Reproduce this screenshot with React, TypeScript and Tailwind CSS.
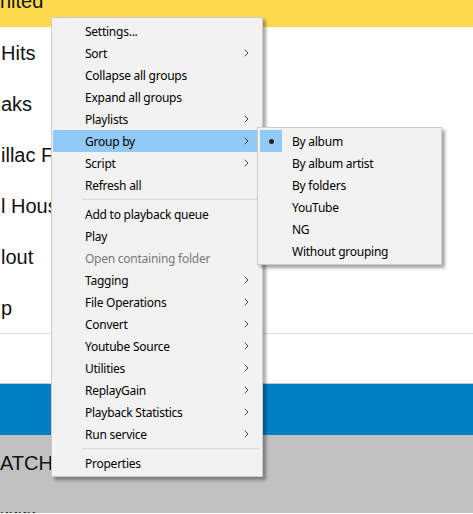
import React from 'react';

type Item =
  | { kind: 'sep' }
  | { kind: 'item'; label: string; sub?: boolean; disabled?: boolean; active?: boolean };

const mainItems: Item[] = [
  { kind: 'item', label: 'Settings...' },
  { kind: 'item', label: 'Sort', sub: true },
  { kind: 'item', label: 'Collapse all groups' },
  { kind: 'item', label: 'Expand all groups' },
  { kind: 'item', label: 'Playlists', sub: true },
  { kind: 'item', label: 'Group by', sub: true, active: true },
  { kind: 'item', label: 'Script', sub: true },
  { kind: 'item', label: 'Refresh all' },
  { kind: 'sep' },
  { kind: 'item', label: 'Add to playback queue' },
  { kind: 'item', label: 'Play' },
  { kind: 'item', label: 'Open containing folder', disabled: true },
  { kind: 'item', label: 'Tagging', sub: true },
  { kind: 'item', label: 'File Operations', sub: true },
  { kind: 'item', label: 'Convert', sub: true },
  { kind: 'item', label: 'Youtube Source', sub: true },
  { kind: 'item', label: 'Utilities', sub: true },
  { kind: 'item', label: 'ReplayGain', sub: true },
  { kind: 'item', label: 'Playback Statistics', sub: true },
  { kind: 'item', label: 'Run service', sub: true },
  { kind: 'sep' },
  { kind: 'item', label: 'Properties' },
];

const groupItems = ['By album', 'By album artist', 'By folders', 'YouTube', 'NG', 'Without grouping'];

const rows = ['Hits', 'aks', 'illac F', 'l Hous', 'lout', 'p'];

function Chevron() {
  return (
    <svg width="5" height="8" viewBox="0 0 5 8" className="shrink-0">
      <path d="M0.8 0.8 L4 4 L0.8 7.2" fill="none" stroke="#444" strokeWidth="1" />
    </svg>
  );
}

function MainMenu() {
  return (
    <div className="absolute left-[51px] top-[17px] w-[212px] border border-[#cccccc] bg-[#f2f2f2] py-[2px] pl-[1px] pr-[2px] shadow-[3px_3px_3px_rgba(0,0,0,0.35)]">
      {mainItems.map((it, i) =>
        it.kind === 'sep' ? (
          <div key={i} className="flex h-[7px] items-center pl-[29px]">
            <div className="h-px w-full bg-[#d7d7d7]" />
          </div>
        ) : (
          <div
            key={i}
            className={`flex h-[22px] items-center pl-[32px] pr-[11px] ${it.active ? 'bg-[#91c9f7]' : ''}`}
          >
            <span className={`flex-1 pt-px leading-[21px] ${it.disabled ? 'text-[#7a7a7a]' : 'text-black'}`}>
              {it.label}
            </span>
            {it.sub && <Chevron />}
          </div>
        )
      )}
    </div>
  );
}

function GroupMenu() {
  return (
    <div className="absolute left-[257px] top-[127px] w-[185px] border border-[#cccccc] bg-[#f2f2f2] px-[2px] py-[2px] shadow-[3px_3px_3px_rgba(0,0,0,0.35)]">
      {groupItems.map((label, i) => (
        <div key={label} className="flex h-[22px] items-center">
          <div className={`flex h-[22px] w-[22px] items-center justify-center ${i === 0 ? 'bg-[#91c9f7]' : ''}`}>
            {i === 0 && <div className="h-[5px] w-[5px] rounded-full bg-[#222]" />}
          </div>
          <span className="pl-[10px] pt-px leading-[21px] text-black">{label}</span>
        </div>
      ))}
    </div>
  );
}

export default function App() {
  return (
    <div className="relative h-[514px] w-[473px] overflow-hidden bg-white font-['Liberation_Sans',Arial,sans-serif] text-[20px] text-[#111]">
      {/* header bar */}
      <div className="h-[27px] overflow-hidden bg-[#ffda4f]">
        <div className="-mt-[9px] leading-[20px]">nited</div>
      </div>

      {/* track list */}
      {rows.map((r) => (
        <div key={r} className="flex h-[51px] items-center pl-[1px] leading-[20px]">
          {r}
        </div>
      ))}
      <div className="h-px bg-[#dcdcdc]" />
      <div className="h-[50px] border-b border-[#c8c8c8]" />
      <div className="h-[51px] bg-[#0080c3]" />
      <div className="h-[78px] overflow-hidden bg-[#c0c0c0]">
        <div className="pt-[18px] leading-[20px]">ATCH</div>
        <div className="pt-[35px] text-[16px] leading-[16px]">ииии</div>
      </div>

      {/* context menus */}
      <div className="font-['Noto_Sans','Open_Sans',sans-serif] text-[12px] tracking-[-0.25px]">
        <MainMenu />
        <GroupMenu />
      </div>
    </div>
  );
}
